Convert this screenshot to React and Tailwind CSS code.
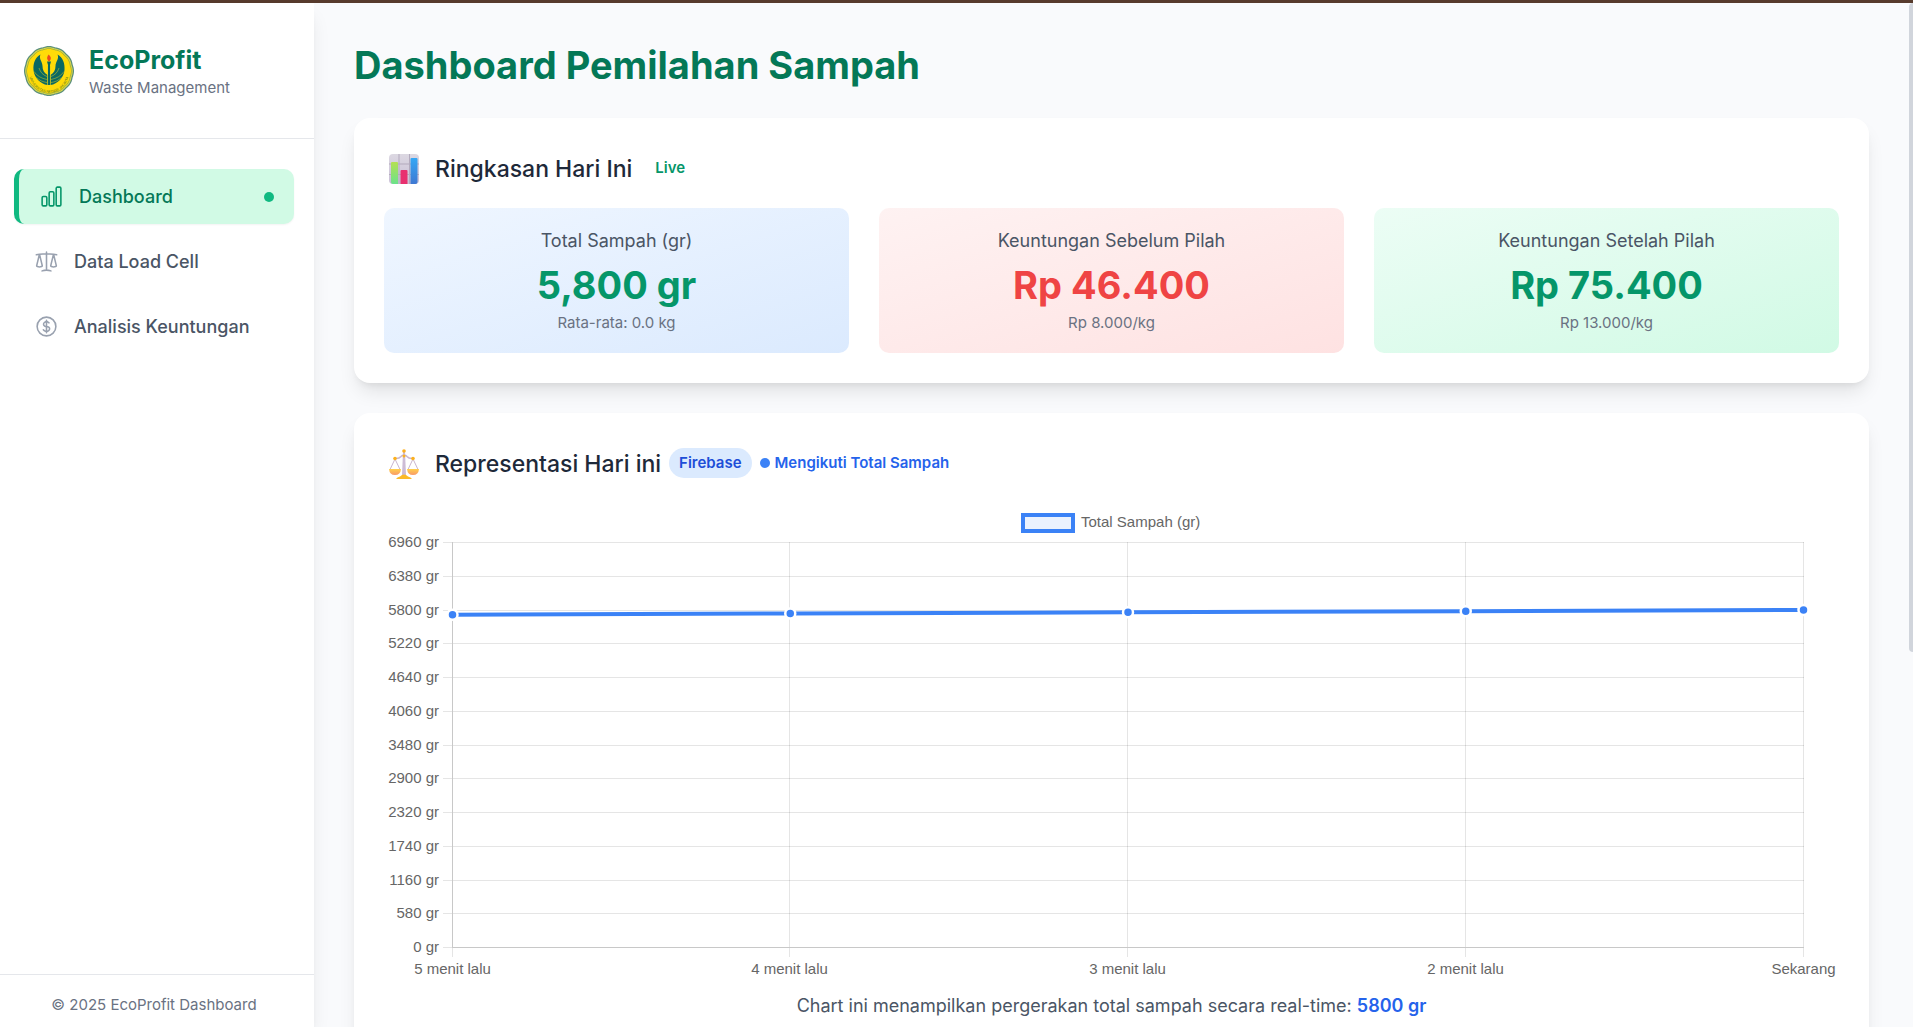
import { HiOutlineChartBar, HiOutlineScale, HiOutlineCurrencyDollar } from "react-icons/hi2";

const NAV_ITEMS = [
  { label: "Dashboard", icon: HiOutlineChartBar, active: true },
  { label: "Data Load Cell", icon: HiOutlineScale },
  { label: "Analisis Keuntungan", icon: HiOutlineCurrencyDollar },
];

const STATS = [
  {
    label: "Total Sampah (gr)",
    value: "5,800 gr",
    note: "Rata-rata: 0.0 kg",
    tile: "from-[#eff6ff] to-[#dbeafe]",
    text: "text-[#059669]",
  },
  {
    label: "Keuntungan Sebelum Pilah",
    value: "Rp 46.400",
    note: "Rp 8.000/kg",
    tile: "from-[#fef2f2] to-[#fee2e2]",
    text: "text-[#ef4444]",
  },
  {
    label: "Keuntungan Setelah Pilah",
    value: "Rp 75.400",
    note: "Rp 13.000/kg",
    tile: "from-[#ecfdf5] to-[#d1fae5]",
    text: "text-[#059669]",
  },
];

const SERIES = [
  { label: "5 menit lalu", value: 5720 },
  { label: "4 menit lalu", value: 5740 },
  { label: "3 menit lalu", value: 5760 },
  { label: "2 menit lalu", value: 5780 },
  { label: "Sekarang", value: 5800 },
];

const Y_MAX = 6960;
const Y_STEP = 580;

function scallop(cx, cy, r, bumps, depth) {
  const points = [];
  for (let i = 0; i < 180; i++) {
    const a = (i / 180) * Math.PI * 2;
    const rr = r - depth * (1 - Math.abs(Math.cos(a * (bumps / 2))));
    points.push(`${(cx + rr * Math.sin(a)).toFixed(2)},${(cy - rr * Math.cos(a)).toFixed(2)}`);
  }
  return points.join(" ");
}

function Logo() {
  return (
    <svg viewBox="0 0 100 100" className="size-[50px] shrink-0" role="img" aria-label="Logo">
      <polygon points={scallop(50, 50, 50, 12, 1)} fill="#5b8f7c" />
      <polygon points={scallop(50, 50, 47.5, 12, 1)} fill="#dcd84a" />
      <polygon points={scallop(50, 50, 45.5, 12, 1)} fill="#9fae3c" />
      <polygon points={scallop(50, 50, 44, 12, 1)} fill="#ffdb08" />
      {[false, true].map((flip) => (
        <g key={String(flip)} transform={flip ? "translate(100 0) scale(-1 1)" : undefined}>
          <path
            d="M33 17C22 23 18 35 19 48C20 63 33 76 47 78L47 58C40 54 37 48 37 40C37 31 29 26 33 17Z"
            fill="#0b6862"
          />
          <path
            d="M20 51C26 60 35 65 46 67M25 63C31 69 38 72 46 73M30 44C33 53 38 58 46 61"
            fill="none"
            stroke="#d8cf22"
            strokeWidth="1"
          />
        </g>
      ))}
      <path d="M46 31h8l-2 7v34l1 6h-6l1-6V38Z" fill="#0b6862" />
      <path d="M47 40v38M53 40v38" stroke="#d8cf22" strokeWidth="1" />
      <path d="M49 17c5 4 6 8 3 12l-2 2-2-2c-3-4-2-7 1-12Z" fill="#ee4b1c" />
      <path id="logo-arc" d="M10.500 54A39.500 39.500 0 0 0 89.500 54" fill="none" />
      <text fontSize="7" fill="#5c7a22" fontFamily="Liberation Sans, sans-serif">
        <textPath href="#logo-arc" startOffset="50%" textAnchor="middle">
          UNIVERSITAS NEGERI JAKARTA
        </textPath>
      </text>
    </svg>
  );
}

function BarChartEmoji() {
  return (
    <svg viewBox="0 0 32 32" className="size-8" aria-hidden="true">
      <defs>
        <linearGradient id="bar-green" x1="0" y1="0" x2="0" y2="1">
          <stop offset="0" stopColor="#b4e052" />
          <stop offset="1" stopColor="#6be28b" />
        </linearGradient>
        <linearGradient id="bar-blue" x1="0" y1="0" x2="0" y2="1">
          <stop offset="0" stopColor="#35a8f5" />
          <stop offset="1" stopColor="#3f78d2" />
        </linearGradient>
        <linearGradient id="bar-back" x1="0" y1="0" x2="0" y2="1">
          <stop offset="0" stopColor="#dcd8e2" />
          <stop offset="1" stopColor="#c9bfd6" />
        </linearGradient>
      </defs>
      <rect x="1" y="1" width="30" height="30" rx="4" fill="url(#bar-back)" />
      <path d="M11 1v30M21.500 1v30M1 11h30M1 21.500h30" stroke="#b3aabd" strokeWidth="1" />
      <path d="M3 10q0-1 1-1h5q1 0 1 1v21H5q-2 0-2-2Z" fill="url(#bar-green)" />
      <path d="M12.500 18q0-1 1-1h5q1 0 1 1v13h-7Z" fill="#e8306f" />
      <path d="M22.500 6q0-1 1-1h5q1 0 1 1v23q0 2-2 2h-5Z" fill="url(#bar-blue)" />
    </svg>
  );
}

function ScaleEmoji() {
  return (
    <svg viewBox="0 0 32 32" className="size-8" aria-hidden="true">
      <defs>
        <linearGradient id="pan" x1="0" y1="0" x2="0" y2="1">
          <stop offset="0" stopColor="#ffd04a" />
          <stop offset="1" stopColor="#f99a6a" />
        </linearGradient>
      </defs>
      <g fill="none" stroke="#c9b6cf" strokeWidth="1">
        <path d="M7 11 2 21.500M7 11l5 10.500M25 11l-5 10.500M25 11l5 10.500" />
        <path d="M7 10.500q4 .5 6-2 1-1.500 3-1.500t3 1.500q2 2.500 6 2" strokeWidth="1.500" />
      </g>
      <path d="M15 4h2l1 23h-4Z" fill="#cdbcd6" />
      <path d="M1 21h12q-.5 6-6 6t-6-6ZM19 21h12q-.5 6-6 6t-6-6Z" fill="url(#pan)" />
      <path d="M8 31q1-2 4-2.500 2-2 4-2t4 2q3 .5 4 2.500Z" fill="#fbb928" />
      <g fill="#fbb01f">
        <circle cx="16" cy="3" r="1.800" />
        <circle cx="16" cy="8" r="1.500" />
        <circle cx="7" cy="10.500" r="1.800" />
        <circle cx="25" cy="10.500" r="1.800" />
      </g>
    </svg>
  );
}

function LineChart() {
  const left = 68;
  const right = 1419;
  const top = 39;
  const bottom = 444;
  const xAt = (i) => left + (i * (right - left)) / (SERIES.length - 1);
  const yAt = (v) => bottom - (v / Y_MAX) * (bottom - top);
  const ticks = Array.from({ length: Y_MAX / Y_STEP + 1 }, (_, i) => Y_MAX - i * Y_STEP);

  return (
    <svg
      viewBox="0 0 1455 480"
      className="block h-auto w-full font-['Liberation_Sans',Arial,sans-serif] text-[15px]"
      role="img"
      aria-label="Total Sampah (gr)"
    >
      <rect x="639" y="12" width="50" height="16" fill="#ebf2fe" stroke="#3b82f6" strokeWidth="4" />
      <text x="697" y="24" fill="#666666">Total Sampah (gr)</text>

      {ticks.map((tick) => {
        const y = Math.round(yAt(tick)) + 0.5;
        return (
          <g key={tick}>
            <path d={`M${left - 9} ${y}H${right + 1}`} stroke="#e5e5e5" />
            <text x={left - 13} y={y + 4} textAnchor="end" fill="#666666">{`${tick} gr`}</text>
          </g>
        );
      })}
      {SERIES.map((point, i) => {
        const x = Math.floor(xAt(i)) + 0.5;
        return (
          <g key={point.label}>
            <path d={`M${x} ${top}V${bottom + 10}`} stroke="#000000" strokeOpacity="0.1" />
            <text x={x} y="471" textAnchor="middle" fill="#666666">{point.label}</text>
          </g>
        );
      })}
      <path d={`M${left + 0.5} ${top}V${bottom + 0.5}H${right + 1}`} fill="none" stroke="#c8c8c8" />

      <polyline
        points={SERIES.map((p, i) => `${xAt(i) + 0.5},${yAt(p.value) + 0.5}`).join(" ")}
        fill="none"
        stroke="#3b82f6"
        strokeWidth="4"
      />
      {SERIES.map((p, i) => (
        <circle
          key={p.label}
          cx={xAt(i) + 0.5}
          cy={yAt(p.value) + 0.5}
          r="5"
          fill="#3b82f6"
          stroke="#ffffff"
          strokeWidth="2.5"
        />
      ))}
    </svg>
  );
}

function Sidebar() {
  return (
    <aside className="z-10 flex w-[314px] shrink-0 flex-col bg-white shadow-[0_12px_19px_-4px_rgba(0,0,0,0.1),0_5px_8px_-5px_rgba(0,0,0,0.1)]">
      <div className="flex items-center gap-[15px] border-b border-gray-200 px-6 py-10">
        <Logo />
        <div>
          <p className="text-[25px] leading-[35px] font-bold text-[#047857]">EcoProfit</p>
          <p className="text-[15px] leading-5 text-gray-500">Waste Management</p>
        </div>
      </div>
      <nav className="flex grow flex-col gap-[10px] pt-[30px] pr-5 pl-[14px]">
        {NAV_ITEMS.map(({ label, icon: Icon, active }) => (
          <a
            key={label}
            href="#"
            className={
              active
                ? "flex h-[55px] items-center gap-[15px] rounded-[10px] border-l-5 border-[#10b981] bg-[#d1fae5] px-5 text-[18px] font-medium text-[#047857] shadow-xs"
                : "flex h-[55px] items-center gap-[15px] rounded-[10px] px-5 text-[18px] font-medium text-gray-600"
            }
          >
            <Icon className={active ? "size-[25px] text-[#059669]" : "size-[25px] text-gray-400"} />
            <span className="grow">{label}</span>
            {active && <span className="size-[10px] rounded-full bg-[#10b981]" />}
          </a>
        ))}
      </nav>
      <footer className="border-t border-gray-200 pt-5 pr-[6px] pb-3 text-center text-[15px] leading-5 text-gray-500">
        © 2025 EcoProfit Dashboard
      </footer>
    </aside>
  );
}

const CARD =
  "rounded-2xl bg-white p-[30px] shadow-[0_12px_19px_-4px_rgba(0,0,0,0.1),0_5px_8px_-5px_rgba(0,0,0,0.1)]";

function CardHeader({ icon, title, children }) {
  return (
    <div className="mb-5 flex h-10 items-center gap-2">
      <div className="flex items-center gap-[15px] pt-[2px] pl-1">
        {icon}
        <h2 className="text-[23px] leading-[35px] font-medium text-gray-800">{title}</h2>
      </div>
      {children}
    </div>
  );
}

export default function App() {
  return (
    <div className="flex h-screen flex-col overflow-hidden font-['Inter',sans-serif]">
      <div className="h-[3px] shrink-0 bg-[#573b2d]" />
      <div className="relative flex min-h-0 grow bg-[#f9fafc]">
        <Sidebar />
        <main className="flex min-w-0 grow flex-col gap-[30px] overflow-hidden py-10 pr-11 pl-10">
          <h1 className="text-[38px] leading-[45px] font-bold text-[#047857]">Dashboard Pemilahan Sampah</h1>

          <section className={CARD}>
            <CardHeader icon={<BarChartEmoji />} title="Ringkasan Hari Ini">
              <span className="px-[15px] text-[15px] leading-5 font-semibold text-[#059669]">Live</span>
            </CardHeader>
            <div className="grid grid-cols-3 gap-[30px]">
              {STATS.map((stat) => (
                <div key={stat.label} className={`rounded-[10px] bg-linear-to-br p-5 text-center ${stat.tile}`}>
                  <p className="text-[18px] leading-[25px] text-gray-600">{stat.label}</p>
                  <p className={`mt-[10px] text-[38px] leading-[45px] font-bold ${stat.text}`}>{stat.value}</p>
                  <p className="mt-[5px] text-[15px] leading-5 text-gray-500">{stat.note}</p>
                </div>
              ))}
            </div>
          </section>

          <section className={CARD}>
            <CardHeader icon={<ScaleEmoji />} title="Representasi Hari ini">
              <span className="rounded-full bg-[#dbeafe] px-[10px] py-[5px] text-[15px] leading-5 font-semibold text-[#1d4ed8]">
                Firebase
              </span>
              <span className="flex items-center gap-[5px] text-[15px] leading-5 font-semibold text-[#2563eb]">
                <span className="size-[10px] rounded-full bg-[#3b82f6]" />
                Mengikuti Total Sampah
              </span>
            </CardHeader>
            <LineChart />
            <p className="mt-[10px] text-center text-[18px] leading-[25px] text-gray-600">
              Chart ini menampilkan pergerakan total sampah secara real-time:{" "}
              <span className="font-semibold text-[#2563eb]">5800 gr</span>
            </p>
          </section>
        </main>
        <div className="absolute top-0 right-0 h-[649px] w-1 rounded-l-sm bg-gray-300" />
      </div>
    </div>
  );
}
